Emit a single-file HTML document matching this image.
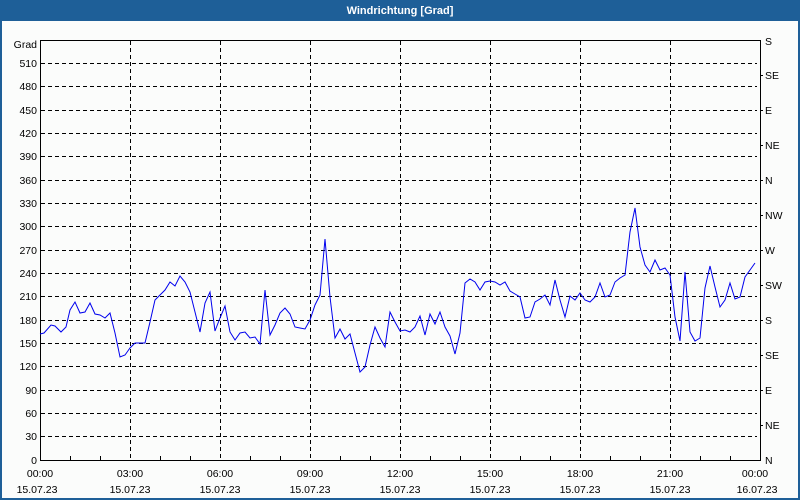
<!DOCTYPE html>
<html><head><meta charset="utf-8"><style>
html,body{margin:0;padding:0;width:800px;height:500px;overflow:hidden;background:#fbfcfb}
svg{display:block}
text{font-family:"Liberation Sans",sans-serif;font-size:10.5px;fill:#000}
</style></head><body>
<svg width="800" height="500" xmlns="http://www.w3.org/2000/svg">
<rect x="0" y="0" width="800" height="500" fill="#1e5f98"/>
<rect x="2" y="21" width="796" height="477" fill="#fbfcfb"/>
<text x="400" y="14" text-anchor="middle" style="font-weight:bold;fill:#fff;font-size:11px">Windrichtung [Grad]</text>
<g stroke="#000" stroke-width="1" stroke-dasharray="4,3" fill="none">
<path d="M130.5 41V460M220.5 41V460M310.5 41V460M400.5 41V460M490.5 41V460M580.5 41V460M670.5 41V460"/>
<path d="M41 63.5H757M41 86.5H757M41 110.5H757M41 133.5H757M41 156.5H757M41 180.5H757M41 203.5H757M41 226.5H757M41 250.5H757M41 273.5H757M41 296.5H757M41 320.5H757M41 343.5H757M41 366.5H757M41 390.5H757M41 413.5H757M41 436.5H757"/>
</g>
<path d="M40.5 40V460.5H760.5V40M40 40.5H760.5" stroke="#000" fill="none"/>
<g stroke="#000">
<path d="M70.5 460V456M100.5 460V456M160.5 460V456M190.5 460V456M250.5 460V456M280.5 460V456M340.5 460V456M370.5 460V456M430.5 460V456M460.5 460V456M520.5 460V456M550.5 460V456M610.5 460V456M640.5 460V456M700.5 460V456M730.5 460V456"/>
<path d="M760 75.5h3M760 110.5h3M760 145.5h3M760 180.5h3M760 215.5h3M760 250.5h3M760 285.5h3M760 320.5h3M760 355.5h3M760 390.5h3M760 425.5h3"/>
</g>
<polyline fill="none" stroke="#0000ee" stroke-width="1" points="40,334 44,333 51,325 55,326 61,332 66,327 70,310 75,302 80,313 85,312 90,303 95,314 100,315 105,318 110,313 115,333 120,357 125,355 130,348 135,343 140,343 145,343 150,322 155,300 160,295 165,290 170,282 175,286 180,276 185,282 190,292 195,312 200,332 205,303 210,292 215,331 220,318 225,306 230,332 235,340 240,333 245,332 250,338 255,337 260,344 265,290 270,335 275,325 280,313 285,308 290,314 295,327 300,328 305,329 310,320 315,305 320,295 325,239 330,297 335,338 340,329 345,339 350,334 355,353 360,372 365,367 370,345 375,327 380,338 385,347 390,312 395,322 400,331 405,330 410,332 415,327 420,316 425,335 430,314 435,324 440,312 445,327 450,336 455,354 460,333 465,283 470,279 475,282 480,290 485,282 490,281 495,282 500,285 505,282 510,291 515,294 520,297 525,318 530,317 535,302 540,299 545,295 550,305 555,280 560,300 565,317 570,296 575,300 580,293 585,300 590,302 595,297 600,283 605,297 610,295 615,282 620,278 625,275 630,232 635,208 640,247 645,265 650,272 655,260 660,270 665,268 670,275 675,317 680,341 685,272 690,332 695,341 700,338 705,288 710,266 715,287 720,307 725,300 730,283 735,299 740,297 745,277 750,270 755,263"/>
<g text-anchor="end">
<text x="37" y="48">Grad</text>
<text x="37" y="67">510</text><text x="37" y="90">480</text><text x="37" y="114">450</text><text x="37" y="137">420</text><text x="37" y="160">390</text><text x="37" y="184">360</text><text x="37" y="207">330</text><text x="37" y="230">300</text><text x="37" y="254">270</text><text x="37" y="277">240</text><text x="37" y="300">210</text><text x="37" y="324">180</text><text x="37" y="347">150</text><text x="37" y="370">120</text><text x="37" y="394">90</text><text x="37" y="417">60</text><text x="37" y="440">30</text><text x="37" y="464">0</text>
</g>
<g>
<text x="765" y="45">S</text><text x="765" y="79">SE</text><text x="765" y="114">E</text><text x="765" y="149">NE</text><text x="765" y="184">N</text><text x="765" y="219">NW</text><text x="765" y="254">W</text><text x="765" y="289">SW</text><text x="765" y="324">S</text><text x="765" y="359">SE</text><text x="765" y="394">E</text><text x="765" y="429">NE</text><text x="765" y="464">N</text>
</g>
<g text-anchor="middle">
<text x="40" y="477">00:00</text><text x="130" y="477">03:00</text><text x="220" y="477">06:00</text><text x="310" y="477">09:00</text><text x="400" y="477">12:00</text><text x="490" y="477">15:00</text><text x="580" y="477">18:00</text><text x="670" y="477">21:00</text><text x="755" y="477">00:00</text>
<text x="37" y="493">15.07.23</text><text x="130" y="493">15.07.23</text><text x="220" y="493">15.07.23</text><text x="310" y="493">15.07.23</text><text x="400" y="493">15.07.23</text><text x="490" y="493">15.07.23</text><text x="580" y="493">15.07.23</text><text x="670" y="493">15.07.23</text><text x="757" y="493">16.07.23</text>
</g>
</svg>
</body></html>
